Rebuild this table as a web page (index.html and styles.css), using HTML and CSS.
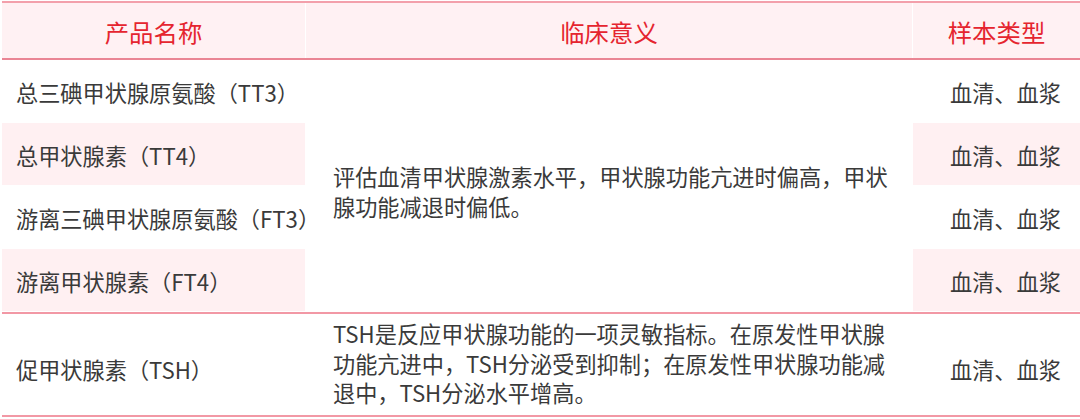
FILE: index.html
```html
<!DOCTYPE html>
<html lang="zh-CN">
<head>
<meta charset="utf-8">
<title>甲状腺功能检测</title>
<link rel="stylesheet" href="styles.css">
</head>
<body>
<div class="tbl">
  <div class="head">
    <div class="hcell">产品名称</div>
    <div class="hcell">临床意义</div>
    <div class="hcell">样本类型</div>
  </div>
  <div class="group">
    <div class="name r1">总三碘甲状腺原氨酸（TT3）</div>
    <div class="mean span4">评估血清甲状腺激素水平，甲状腺功能亢进时偏高，甲状腺功能减退时偏低。</div>
    <div class="type r1">血清、血浆</div>
    <div class="name r2 pink">总甲状腺素（TT4）</div>
    <div class="type r2 pink">血清、血浆</div>
    <div class="name r3">游离三碘甲状腺原氨酸（FT3）</div>
    <div class="type r3">血清、血浆</div>
    <div class="name r4 pink">游离甲状腺素（FT4）</div>
    <div class="type r4 pink">血清、血浆</div>
  </div>
  <div class="group tsh">
    <div class="name">促甲状腺素（TSH）</div>
    <div class="mean">TSH是反应甲状腺功能的一项灵敏指标。在原发性甲状腺功能亢进中，TSH分泌受到抑制；在原发性甲状腺功能减退中，TSH分泌水平增高。</div>
    <div class="type">血清、血浆</div>
  </div>
</div>
</body>
</html>
```
FILE: styles.css
```css
html, body {
  margin: 0;
  padding: 0;
  background: #ffffff;
}

body {
  font-family: "Noto Sans CJK SC", "Noto Sans", sans-serif;
  color: #3a3a3a;
}

.tbl {
  margin: 1px 0 0 2px;
  width: 1078px;
}

.head,
.group {
  display: grid;
  grid-template-columns: 303px 606px 167px;
  column-gap: 1px;
}

.head {
  height: 55px;
  border-top: 2px solid #f3a0ab;
  border-bottom: 2px solid #ea8594;
}

.hcell {
  background: #fff1f3;
  color: #e5252f;
  font-size: 24.4px;
  display: flex;
  align-items: center;
  justify-content: center;
  padding-top: 1px;
}

.group {
  grid-template-rows: repeat(4, 62px);
  row-gap: 1px;
  padding-bottom: 1px;
  border-bottom: 2px solid #f298a5;
}

.group.tsh {
  grid-template-rows: 101px;
  padding-bottom: 0;
}

.name,
.type,
.mean {
  font-size: 22.2px;
  display: flex;
  align-items: center;
}

.name {
  grid-column: 1;
  padding-left: 14px;
  padding-top: 2px;
  white-space: nowrap;
}

.type {
  grid-column: 3;
  padding-left: 37px;
  padding-top: 2px;
  white-space: nowrap;
}

.mean {
  grid-column: 2;
  line-height: 29.5px;
  padding: 0 22px 0 27px;
}

.span4 {
  grid-row: 1 / span 4;
  padding-top: 12px;
}

.tsh .name,
.tsh .type {
  padding-top: 9px;
}

.tsh .mean {
  padding-bottom: 2px;
}

.r1 { grid-row: 1; }
.r2 { grid-row: 2; }
.r3 { grid-row: 3; }
.r4 { grid-row: 4; }

.pink {
  background: #fff0f2;
}
```
